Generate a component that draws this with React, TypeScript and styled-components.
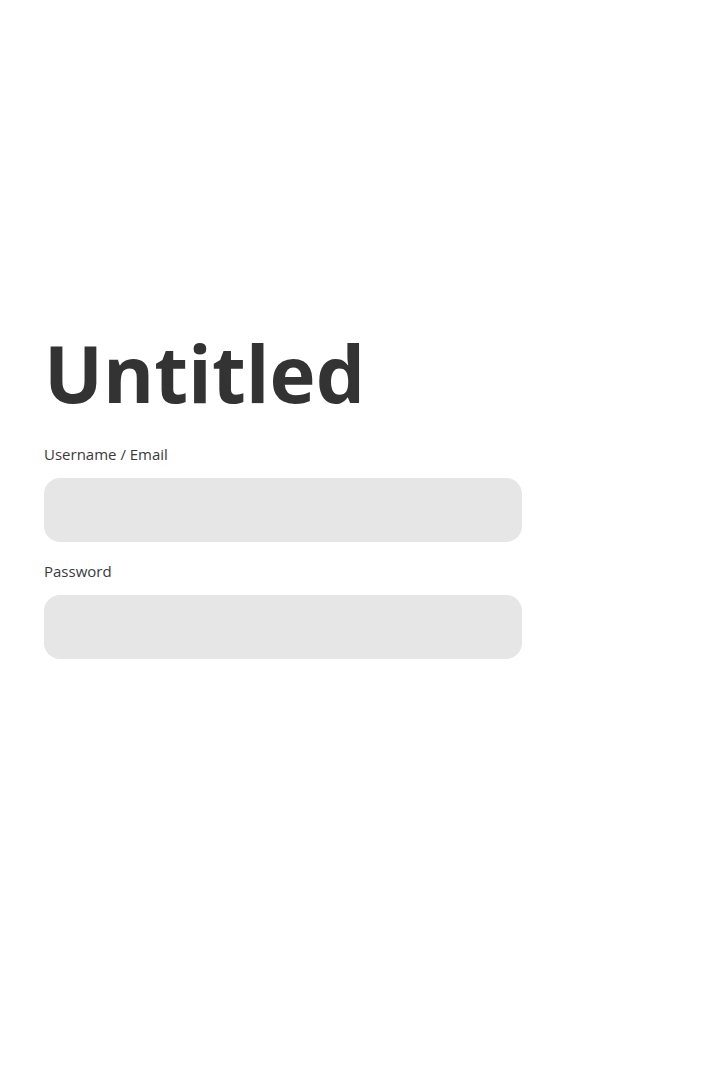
import React from "react";
import styled, { createGlobalStyle } from "styled-components";

const GlobalStyle = createGlobalStyle`
  html, body {
    margin: 0;
    padding: 0;
    background: #fff;
  }
  body {
    font-family: "Open Sans", "Noto Sans", sans-serif;
    color: #333;
  }
`;

const Page = styled.main`
  min-height: 1080px;
  box-sizing: border-box;
  padding: 327px 44px 0;
`;

const Form = styled.form`
  width: 478px;
  display: flex;
  flex-direction: column;
`;

const Title = styled.h1`
  margin: 0 0 23px;
  font-size: 78px;
  line-height: 1.2;
  font-weight: 700;
  color: #333;
`;

const Field = styled.label`
  display: flex;
  flex-direction: column;
  gap: 14px;
  margin-bottom: 19px;
`;

const LabelText = styled.span`
  font-size: 15px;
  line-height: 20px;
  color: #3a3a3a;
`;

const Input = styled.input`
  box-sizing: border-box;
  width: 100%;
  height: 64px;
  border: none;
  border-radius: 16px;
  background: #e6e6e6;
  padding: 0 20px;
  font-size: 16px;
  font-family: inherit;
  outline: none;
`;

export default function App() {
  return (
    <>
      <GlobalStyle />
      <Page>
        <Form onSubmit={(e) => e.preventDefault()}>
          <Title>Untitled</Title>
          <Field>
            <LabelText>Username / Email</LabelText>
            <Input type="text" />
          </Field>
          <Field>
            <LabelText>Password</LabelText>
            <Input type="password" />
          </Field>
        </Form>
      </Page>
    </>
  );
}
